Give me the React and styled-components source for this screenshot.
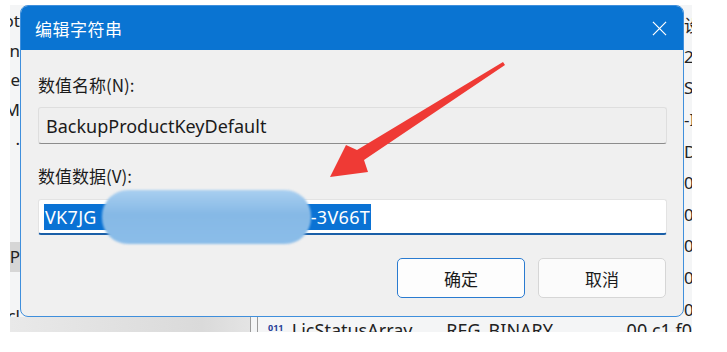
import styled, { createGlobalStyle } from "styled-components";

const GlobalStyle = createGlobalStyle`
  html, body {
    margin: 0;
    padding: 0;
    background: #ffffff;
  }
  body {
    font-family: "Noto Sans", "Noto Sans CJK SC", sans-serif;
  }
`;

const leftRows = ["ot", "n", "Re", "eM", ".", "", "", "", "P", "", "cl"];
const rightRows = ["设", "2", "SC", "-I", "D", "00", "00", "00", "00", "00"];

const App = () => {
  return (
    <>
      <GlobalStyle />
      <Page>
        <Shot>
          <LeftStrip>
            {leftRows.map((t, i) => (
              <StripRow key={i} $selected={t === "P"} $height={29.5}>
                {t}
              </StripRow>
            ))}
          </LeftStrip>

          <Dialog>
            <TitleBar>
              <span className="title">编辑字符串</span>
              <CloseIcon viewBox="0 0 16 16">
                <path d="M1 1 L15 15 M15 1 L1 15" />
              </CloseIcon>
            </TitleBar>
            <Body>
              <Label>数值名称(N):</Label>
              <Field $readOnly>BackupProductKeyDefault</Field>
              <Label $gap={22}>数值数据(V):</Label>
              <Field>
                <Selection>
                  <span>VK7JG</span>
                  <Blur />
                  <span>-3V66T</span>
                </Selection>
              </Field>
              <ButtonRow>
                <Button $primary>确定</Button>
                <Button>取消</Button>
              </ButtonRow>
            </Body>
          </Dialog>

          <RightStrip>
            {rightRows.map((t, i) => (
              <StripRow key={i} $height={31.6} $left>
                {t}
              </StripRow>
            ))}
          </RightStrip>

          <BottomStrip>
            <div className="tree" />
            <div className="split" />
            <div className="cell icon">011</div>
            <div className="cell name">LicStatusArray</div>
            <div className="cell type">REG_BINARY</div>
            <div className="cell data">00 c1 f0</div>
          </BottomStrip>

          <Arrow viewBox="10 5 682 327">
            <polygon points="503,62 357,150 346,145 330,177 368,172 364,160 505,65" />
          </Arrow>
        </Shot>
      </Page>
    </>
  );
};

export default App;

const Page = styled.div`
  width: 727px;
  height: 352px;
  padding: 5px 0 0 10px;
  box-sizing: border-box;
  background: #ffffff;
`;

const Shot = styled.div`
  position: relative;
  width: 682px;
  height: 327px;
  display: grid;
  grid-template-columns: 10px 664px 8px;
  grid-template-rows: 312px 15px;
  background: #f4f5f6;
  overflow: hidden;
  color: #1b1b1b;
`;

const LeftStrip = styled.div`
  grid-column: 1;
  grid-row: 1;
  display: flex;
  flex-direction: column;
  overflow: hidden;
  padding-top: 1px;
`;

const RightStrip = styled.div`
  grid-column: 3;
  grid-row: 1;
  display: flex;
  flex-direction: column;
  overflow: hidden;
  padding-top: 4px;
`;

const StripRow = styled.div`
  height: ${(p) => p.$height}px;
  flex: none;
  display: flex;
  align-items: center;
  justify-content: ${(p) => (p.$left ? "flex-start" : "flex-end")};
  font-size: 17px;
  white-space: nowrap;
  overflow: hidden;
  color: #222;
  background: ${(p) => (p.$selected ? "#d6d6d6" : "transparent")};
`;

const Dialog = styled.div`
  grid-column: 2;
  grid-row: 1;
  display: flex;
  flex-direction: column;
  background: #f0f0f0;
  border: 1px solid #3f8fdc;
  border-radius: 8px;
  overflow: hidden;
  box-sizing: border-box;
  z-index: 1;
`;

const TitleBar = styled.div`
  height: 44px;
  flex: none;
  display: flex;
  align-items: center;
  justify-content: space-between;
  padding: 0 16px 0 14px;
  background: #0a74d2;
  color: #ffffff;
  .title {
    font-size: 17px;
    font-family: "Noto Sans CJK SC", sans-serif;
    letter-spacing: 0.5px;
  }
`;

const CloseIcon = styled.svg`
  width: 15px;
  height: 15px;
  fill: none;
  stroke: #ffffff;
  stroke-width: 1.3;
`;

const Body = styled.div`
  display: flex;
  flex-direction: column;
  padding: 0 16px 0 17px;
`;

const Label = styled.div`
  margin-top: ${(p) => p.$gap || 25}px;
  height: 20px;
  line-height: 20px;
  font-size: 17px;
  font-family: "Noto Sans CJK SC", sans-serif;
  color: #1b1b1b;
`;

const Field = styled.div`
  margin-top: ${(p) => (p.$readOnly ? 12 : 13)}px;
  height: ${(p) => (p.$readOnly ? 37 : 36)}px;
  box-sizing: border-box;
  display: flex;
  align-items: center;
  padding-left: ${(p) => (p.$readOnly ? 7 : 5)}px;
  font-size: 18px;
  background: ${(p) => (p.$readOnly ? "#efefef" : "#ffffff")};
  border: 1px solid ${(p) => (p.$readOnly ? "#dedede" : "#e3e3e3")};
  border-bottom: ${(p) => (p.$readOnly ? "1px solid #8c8c8c" : "2px solid #1a5fa8")};
  border-radius: 3px;
  color: #1b1b1b;
  white-space: nowrap;
`;

const Selection = styled.span`
  display: flex;
  align-items: center;
  height: 26px;
  padding: 0 1px;
  background: #0a72d4;
  color: #ffffff;
  letter-spacing: 0.3px;
`;

const Blur = styled.span`
  flex: none;
  width: 209px;
  height: 54px;
  margin: -14px 0 -14px 5px;
  border-radius: 26px;
  background: linear-gradient(180deg, #a9cff0 0%, #86b9e6 45%, #8bbde9 100%);
  filter: blur(1px);
  position: relative;
  z-index: 1;
`;

const ButtonRow = styled.div`
  margin-top: 23px;
  display: flex;
  justify-content: flex-end;
  gap: 13px;
  padding-right: 1px;
`;

const Button = styled.div`
  width: 128px;
  height: 40px;
  box-sizing: border-box;
  display: flex;
  align-items: center;
  justify-content: center;
  font-size: 17px;
  font-family: "Noto Sans CJK SC", sans-serif;
  color: #1b1b1b;
  background: ${(p) => (p.$primary ? "#fdfdfd" : "#fbfbfb")};
  border: ${(p) => (p.$primary ? "1.5px solid #2a7bd0" : "1px solid #d6d6d6")};
  border-radius: 5px;
`;

const BottomStrip = styled.div`
  grid-column: 1 / 4;
  grid-row: 2;
  display: flex;
  overflow: hidden;
  background: #f4f5f6;
  .tree {
    width: 240px;
    flex: none;
    background: linear-gradient(90deg, #e9e9e9, #dadada 80%, #e4e4e4);
  }
  .split {
    width: 6px;
    flex: none;
    border-left: 1px solid #9a9a9a;
    border-right: 1px solid #9a9a9a;
    margin-right: 10px;
  }
  .cell {
    font-size: 18px;
    line-height: 18px;
    padding-top: 4px;
    white-space: nowrap;
    color: #222;
  }
  .icon {
    font-size: 9px;
    font-weight: bold;
    color: #2a3f9a;
    padding-top: 2px;
    width: 24px;
  }
  .name {
    width: 156px;
  }
  .type {
    width: 182px;
  }
`;

const Arrow = styled.svg`
  position: absolute;
  inset: 0;
  width: 682px;
  height: 327px;
  z-index: 2;
  pointer-events: none;
  fill: #ef3a35;
`;
